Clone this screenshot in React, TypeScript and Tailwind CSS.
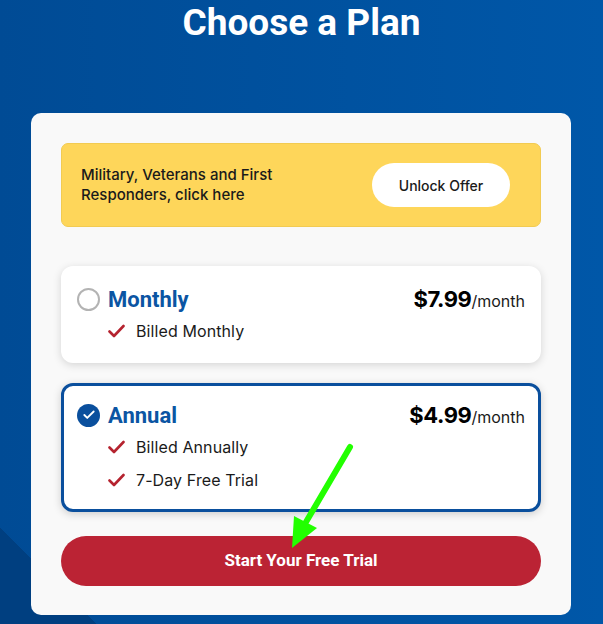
import { Check } from "lucide-react";

const body = { fontFamily: "Inter, 'Noto Sans', sans-serif" };
const head = { fontFamily: "Roboto, 'Liberation Sans', sans-serif" };

function Feature({ text }: { text: string }) {
  return (
    <div className="flex h-[24px] items-center gap-[11px] pl-[31px]">
      <svg width="17" height="14" viewBox="0 0 17 14" className="shrink-0">
        <path d="M1.5 7.5 L6 12 L15.5 2" fill="none" stroke="#b5232f" strokeWidth="2.6" strokeLinecap="round" strokeLinejoin="round" />
      </svg>
      <span className="text-[16px] tracking-[0.1px] text-[#1a1a1a]">{text}</span>
    </div>
  );
}

function Plan({
  name,
  price,
  selected,
  features,
}: {
  name: string;
  price: string;
  selected?: boolean;
  features: string[];
}) {
  return (
    <div
      className={
        selected
          ? "rounded-[12px] border-[3px] border-[#0a4f9d] bg-white px-[13px] pt-[16px] pb-[17px] shadow-[0_2px_8px_rgba(0,0,0,0.18)]"
          : "rounded-[12px] border-[3px] border-transparent bg-white px-[13px] pt-[17px] pb-[17px] shadow-[0_2px_8px_rgba(0,0,0,0.15)]"
      }
    >
      <div className="flex h-[26px] items-center">
        {selected ? (
          <div className="flex h-[23px] w-[23px] items-center justify-center rounded-full bg-[#0a4f9d]">
            <Check size={14} strokeWidth={3.2} color="#ffffff" />
          </div>
        ) : (
          <div className="h-[23px] w-[23px] rounded-full border-2 border-[#b3b3b3] bg-white" />
        )}
        <span style={head} className="ml-[8px] text-[22px] font-bold text-[#0b55a3]">
          {name}
        </span>
        <div className="ml-auto flex items-baseline" style={body}>
          <span className="text-[22px] font-bold tracking-[-0.4px] text-black">{price}</span>
          <span className="text-[16px] text-[#1a1a1a]">/month</span>
        </div>
      </div>
      <div className="mt-[7px] flex flex-col gap-[9px]">
        {features.map((f) => (
          <Feature key={f} text={f} />
        ))}
      </div>
    </div>
  );
}

export default function App() {
  return (
    <div className="relative h-[624px] w-full overflow-hidden bg-[linear-gradient(45deg,#003f80_0,#003f80_68px,transparent_68px),linear-gradient(90deg,#004b95,#0057a8)]">
      <h1 style={head} className="pt-[2px] text-center text-[37px] leading-[42px] font-bold text-white">
        Choose a Plan
      </h1>

      <div className="mt-[69px] ml-[31px] w-[540px] rounded-[10px] bg-[#f9f9f9] px-[30px] pt-[30px] pb-[29px]">
        <div className="flex h-[84px] items-center justify-between rounded-[7px] border border-[#f2cb52] bg-[#fed65a] pr-[30px] pl-[19px]" style={body}>
          <p className="text-[15px] leading-[20px] font-medium text-[#1a1a1a]">
            Military, Veterans and First
            <br />
            Responders, click here
          </p>
          <button className="h-[44px] w-[138px] rounded-full bg-white text-[14px] font-medium text-[#1a1a1a]">
            Unlock Offer
          </button>
        </div>

        <div className="mt-[39px] flex flex-col gap-[20px]" style={body}>
          <Plan name="Monthly" price="$7.99" features={["Billed Monthly"]} />
          <Plan name="Annual" price="$4.99" selected features={["Billed Annually", "7-Day Free Trial"]} />
        </div>

        <button
          style={head}
          className="mt-[24px] h-[50px] w-full rounded-full bg-[#bb2334] text-[17px] font-bold text-white"
        >
          Start Your Free Trial
        </button>
      </div>

      <svg className="pointer-events-none absolute inset-0 h-full w-full" viewBox="0 0 603 624">
        <line x1="350" y1="447" x2="306" y2="522" stroke="#22ff00" strokeWidth="6" strokeLinecap="round" />
        <polygon points="294,516 317,528 292,548" fill="#22ff00" />
      </svg>
    </div>
  );
}
